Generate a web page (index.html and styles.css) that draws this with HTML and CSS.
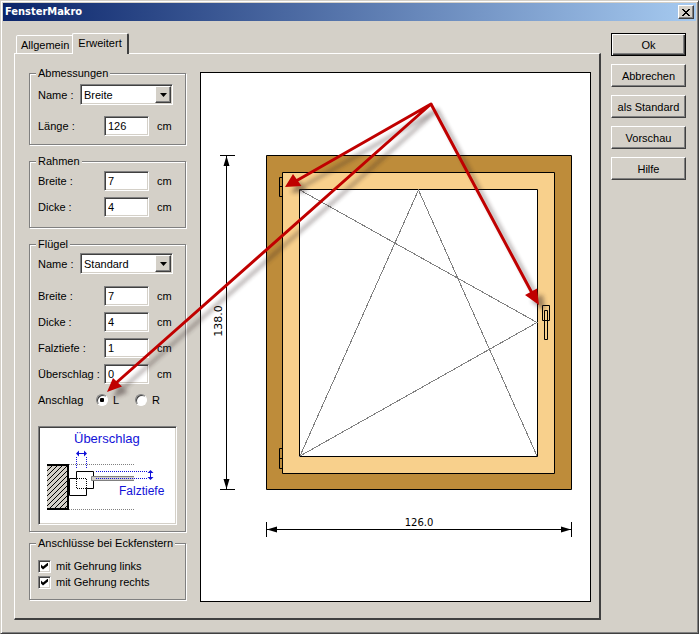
FILE: index.html
```html
<!DOCTYPE html>
<html lang="de">
<head>
<meta charset="utf-8">
<title>FensterMakro</title>
<link rel="stylesheet" href="styles.css">
</head>
<body>
<main class="dialog">
  <header class="titlebar">
    <h1 class="title">FensterMakro</h1>
    <button class="close" type="button" aria-label="Schließen">
      <svg width="8" height="7" viewBox="0 0 8 7" shape-rendering="crispEdges"><path d="M0 0h2v1h1v1h2V1h1V0h2v1H7v1H6v1H5v1h1v1h1v1h1v1H6V6H5V5H3v1H2v1H0V6h1V5h1V4h1V3H2V2H1V1H0z"/></svg>
    </button>
  </header>

  <form class="content">
    <div class="main">
      <div class="tabs" role="tablist">
        <button class="tab" type="button" role="tab" aria-selected="false">Allgemein</button>
        <button class="tab tab-active" type="button" role="tab" aria-selected="true">Erweitert</button>
      </div>
      <div class="panel">
        <div class="groups">
          <fieldset class="group group-size">
            <legend>Abmessungen</legend>
            <div class="row row-select">
              <label for="size-name">Name :</label>
              <span class="combo">
                <select id="size-name"><option>Breite</option><option>Höhe</option></select>
                <span class="combo-button"><svg width="7" height="4" viewBox="0 0 7 4"><path d="M0 0h7L3.500 4z"/></svg></span>
              </span>
            </div>
            <div class="row">
              <label for="size-length">Länge :</label>
              <input class="field" id="size-length" type="text" value="126"><span class="unit">cm</span>
            </div>
          </fieldset>

          <fieldset class="group group-frame">
            <legend>Rahmen</legend>
            <div class="row">
              <label for="frame-width">Breite :</label>
              <input class="field" id="frame-width" type="text" value="7"><span class="unit">cm</span>
            </div>
            <div class="row">
              <label for="frame-depth">Dicke :</label>
              <input class="field" id="frame-depth" type="text" value="4"><span class="unit">cm</span>
            </div>
          </fieldset>

          <fieldset class="group group-sash">
            <legend>Flügel</legend>
            <div class="row row-select">
              <label for="sash-name">Name :</label>
              <span class="combo">
                <select id="sash-name"><option>Standard</option></select>
                <span class="combo-button"><svg width="7" height="4" viewBox="0 0 7 4"><path d="M0 0h7L3.500 4z"/></svg></span>
              </span>
            </div>
            <div class="row">
              <label for="sash-width">Breite :</label>
              <input class="field" id="sash-width" type="text" value="7"><span class="unit">cm</span>
            </div>
            <div class="row">
              <label for="sash-depth">Dicke :</label>
              <input class="field" id="sash-depth" type="text" value="4"><span class="unit">cm</span>
            </div>
            <div class="row">
              <label for="sash-rebate">Falztiefe :</label>
              <input class="field" id="sash-rebate" type="text" value="1"><span class="unit">cm</span>
            </div>
            <div class="row">
              <label for="sash-overlap">Überschlag :</label>
              <input class="field" id="sash-overlap" type="text" value="0"><span class="unit">cm</span>
            </div>
            <div class="row row-radio" role="radiogroup" aria-labelledby="hinge-side">
              <span id="hinge-side">Anschlag</span>
              <label class="choice"><input type="radio" name="side" checked>L</label>
              <label class="choice"><input type="radio" name="side">R</label>
            </div>
            <div class="detail">
              <svg viewBox="0 0 135 95" role="img" aria-label="Schnitt durch Rahmen und Flügel">
                <defs>
                  <pattern id="hatch" width="5" height="5" patternUnits="userSpaceOnUse">
                    <path d="M-1 1l2-2M0 5l5-5M4 6l2-2" stroke="#000" fill="none"/>
                  </pattern>
                </defs>
                <path d="M7 37h21v44H7z" fill="#d4d0c8"/>
                <path d="M7 37h21v44H7z" fill="url(#hatch)"/>
                <path d="M7 37h21v44H7" fill="none" stroke="#000" stroke-width="2"/>
                <path d="M29 36.500h65M29 81.500h65" class="dots gray"/>
                <path d="M29.500 50.500h7v-7h17v17h-7v7h-17z" fill="#fff" stroke="#000"/>
                <path d="M37 50.500h10M37 60.500h10M36.500 51v10M46.500 51v10" class="dots black"/>
                <path d="M94 48.500H51.500v4H94" fill="#d4d0c8" stroke="#808080"/>
                <path d="M56 43.500h51M56 50.500h51M36.500 29v12M46.500 29v12" class="dots blue"/>
                <path d="M37 25.500h9M110.500 43v8" class="blue"/>
                <path d="M36 25.500l3-3v6zM47 25.500l-3-3v6zM110.500 42l-3 3h6zM110.500 52l-3-3h6z" fill="#1212d8"/>
                <text x="34" y="15" class="detail-text detail-large">Überschlag</text>
                <text x="79" y="67" class="detail-text">Falztiefe</text>
              </svg>
            </div>
          </fieldset>

          <fieldset class="group group-joints">
            <legend>Anschlüsse bei Eckfenstern</legend>
            <label class="check"><input type="checkbox" checked>mit Gehrung links</label>
            <label class="check"><input type="checkbox" checked>mit Gehrung rechts</label>
          </fieldset>
        </div>

        <div class="preview">
          <svg viewBox="200 72 391 530" role="img" aria-label="Ansicht des Fensters mit Maßen">
            <g stroke="#000">
              <path d="M266.500 155.500h305v334h-305z" fill="#be8c3a"/>
              <path d="M282.500 172.500h272v301h-272z" fill="#f8d08c"/>
              <path d="M299.500 189.500h238v267h-238z" fill="#fff"/>
              <path d="M282 177.500h-2.500v19h2.500M279.500 186.500h3M282 448.500h-2.500v20h2.500M279.500 458.500h3M542.500 305.500h7v15h-7zM544.500 310.500h3v29h-3z" fill="none"/>
              <path d="M226.500 155v334M220 155.500h15M220 489.500h15M266 529.500h306M266.500 522v15M571.500 522v15" fill="none"/>
            </g>
            <path d="M226.500 156l3 10h-6zM226.500 489l3-10h-6zM267 529.500l10-3v6zM571 529.500l-10-3v6z"/>
            <path d="M300 190l237 132.500L300 456l118.500-266L537 456" fill="none" stroke="#808080" shape-rendering="crispEdges"/>
            <text x="419" y="526" text-anchor="middle" class="dimension">126.0</text>
            <text transform="translate(222 321) rotate(-90)" text-anchor="middle" class="dimension dimension-side">138.0</text>
          </svg>
        </div>
      </div>
    </div>

    <div class="actions">
      <button class="action action-default" type="submit">Ok</button>
      <button class="action" type="button">Abbrechen</button>
      <button class="action" type="button">als Standard</button>
      <button class="action" type="button">Vorschau</button>
      <button class="action" type="button">Hilfe</button>
    </div>
  </form>

  <svg class="pointers" viewBox="0 0 699 634" aria-hidden="true">
    <defs>
      <filter id="soft" x="-10%" y="-10%" width="120%" height="120%"><feGaussianBlur stdDeviation="2"/></filter>
      <g id="arrows">
        <path d="M296 181L431 104L116 383M431 104L532 293" fill="none" stroke-width="3" stroke-linejoin="round"/>
        <path d="M285 187l8-13 8.500 12zM107 392l6-14 9 8.500zM539 305l-14-10 12-6.500z" stroke="none"/>
      </g>
    </defs>
    <use href="#arrows" class="pointer-shadow" transform="translate(6 6)" filter="url(#soft)"/>
    <use href="#arrows" class="pointer"/>
  </svg>
</main>
</body>
</html>
```
FILE: styles.css
```css
:root {
  --face: #d4d0c8;
  --light: #fff;
  --shade: #808080;
  --dark: #404040;
}

* {
  box-sizing: border-box;
}

body {
  margin: 0;
  background: var(--face);
  color: #000;
  font: 11px/14px "Liberation Sans", Arial, sans-serif;
}

button,
input,
select {
  margin: 0;
  font: inherit;
  color: inherit;
  border-radius: 0;
}

svg {
  display: block;
}

.dialog {
  position: relative;
  display: flex;
  flex-direction: column;
  min-height: 100vh;
  padding: 2px;
  border: 1px solid;
  border-color: var(--face) var(--dark) var(--dark) var(--face);
  box-shadow: inset 1px 1px var(--light), inset -1px -1px var(--shade);
}

.titlebar {
  display: flex;
  align-items: center;
  justify-content: space-between;
  height: 18px;
  padding: 0 2px;
  background: linear-gradient(to right, #0a246a, #a6caf0);
}

.title {
  margin: 0;
  color: #fff;
  font: bold 11px/16px "DejaVu Sans Condensed", "DejaVu Sans", sans-serif;
}

.close,
.action,
.combo-button {
  display: flex;
  align-items: center;
  justify-content: center;
  padding: 0;
  background: var(--face);
  border: 1px solid;
  border-color: var(--light) var(--dark) var(--dark) var(--light);
  box-shadow: inset -1px -1px var(--shade);
}

.close {
  width: 16px;
  height: 14px;
}

.content {
  display: flex;
  gap: 10px;
  padding: 12px 10px 11px 11px;
}

.main {
  flex: 1;
  min-width: 0;
}

.tabs {
  display: flex;
  align-items: flex-end;
  padding-left: 2px;
}

.tab {
  height: 18px;
  padding: 0 4px;
  background: var(--face);
  border: 1px solid var(--light);
  border-width: 1px 1px 0;
  border-radius: 2px 2px 0 0;
}

.tab-active {
  position: relative;
  height: 21px;
  margin: 0 0 -1px -2px;
  padding: 0 5px 2px;
  border-right: 2px solid var(--dark);
}

.panel {
  display: flex;
  gap: 14px;
  padding: 12px 8px 16px 14px;
  border: 1px solid var(--light);
  border-right: 2px solid var(--dark);
  border-bottom: 2px solid var(--dark);
}

.groups {
  flex: none;
  width: 157px;
}

.group {
  min-width: 0;
  margin: 0 0 9px;
  padding: 0 8px;
  border: 1px solid var(--shade);
  box-shadow: 1px 1px var(--light), inset 1px 1px var(--light);
}

.group legend {
  margin-left: -2px;
  padding: 0 2px;
  background: var(--face);
}

.group-size {
  padding-top: 4px;
  padding-bottom: 8px;
}

.group-frame {
  padding-top: 3px;
  padding-bottom: 10px;
}

.group-sash {
  margin-bottom: 4px;
  padding-top: 2px;
  padding-bottom: 6px;
}

.group-joints {
  margin-bottom: 0;
  padding-top: 8px;
  padding-bottom: 9px;
}

.row {
  display: grid;
  grid-template-columns: 66px 45px 1fr;
  align-items: center;
  height: 20px;
  white-space: nowrap;
}

.row + .row {
  margin-top: 6px;
}

.row-select {
  grid-template-columns: 42px 93px;
  height: 21px;
}

.row-select + .row {
  margin-top: 12px;
}

.group-size .row-select + .row {
  margin-top: 11px;
}

.unit {
  padding-left: 8px;
}

.field,
.combo,
.detail {
  background: #fff;
  border: 1px solid;
  border-color: var(--shade) var(--light) var(--light) var(--shade);
  box-shadow: inset 1px 1px var(--dark), inset -1px -1px var(--face);
}

.field {
  width: 100%;
  height: 20px;
  padding: 1px 3px;
}

.combo {
  position: relative;
  height: 21px;
}

.combo select {
  appearance: none;
  width: 100%;
  height: 19px;
  padding: 1px 18px 0 3px;
  background: none;
  border: 0;
}

.combo-button {
  position: absolute;
  top: 1px;
  right: 1px;
  bottom: 1px;
  width: 16px;
  pointer-events: none;
}

.row-radio {
  grid-template-columns: 58px 39px 1fr;
}

.choice {
  display: flex;
  align-items: center;
  gap: 5px;
}

.choice input {
  appearance: none;
  display: grid;
  place-items: center;
  width: 12px;
  height: 12px;
  background: #fff;
  border: 1px solid;
  border-color: var(--shade) var(--light) var(--light) var(--shade);
  border-radius: 50%;
  box-shadow: inset 1px 1px var(--dark);
}

.choice input:checked::before {
  content: "";
  width: 4px;
  height: 4px;
  background: #000;
  border-radius: 1px;
}

.detail {
  margin-top: 16px;
  padding: 1px;
}

.dots {
  fill: none;
  stroke-dasharray: 1 1;
}

.black {
  stroke: #000;
}

.gray {
  stroke: #808080;
}

.blue {
  stroke: #1212d8;
}

.detail-text {
  fill: #1212d8;
  font-size: 12px;
}

.detail-large {
  font-size: 13px;
}

.check {
  display: flex;
  align-items: center;
  gap: 5px;
  height: 16px;
}

.check input {
  appearance: none;
  display: grid;
  place-items: center;
  width: 13px;
  height: 13px;
  background: #fff;
  border: 1px solid;
  border-color: var(--shade) var(--light) var(--light) var(--shade);
  box-shadow: inset 1px 1px var(--dark), inset -1px -1px var(--face);
}

.check input:checked::before {
  content: "";
  width: 7px;
  height: 7px;
  background: #000;
  clip-path: polygon(0 2px, 2px 4px, 7px 0, 7px 3px, 2px 7px, 0 5px);
}

.preview {
  flex: 1;
  min-width: 0;
  margin-top: 6px;
  background: #fff;
  outline: 1px solid #000;
  outline-offset: -1px;
}

.preview svg {
  width: 100%;
}

.dimension {
  font: 10px "DejaVu Sans", sans-serif;
}

.dimension-side {
  font-size: 11px;
}

.actions {
  display: flex;
  flex-direction: column;
  flex: none;
  gap: 8px;
  width: 75px;
}

.action {
  height: 23px;
}

.action-default {
  border-color: #000;
  box-shadow: inset 1px 1px var(--light), inset -1px -1px var(--dark), inset -2px -2px var(--shade);
}

.pointers {
  position: absolute;
  top: -1px;
  left: -1px;
  width: 699px;
  pointer-events: none;
}

.pointer {
  fill: #c00000;
  stroke: #c00000;
}

.pointer-shadow {
  fill: #302020;
  stroke: #302020;
  opacity: 0.45;
}
```
